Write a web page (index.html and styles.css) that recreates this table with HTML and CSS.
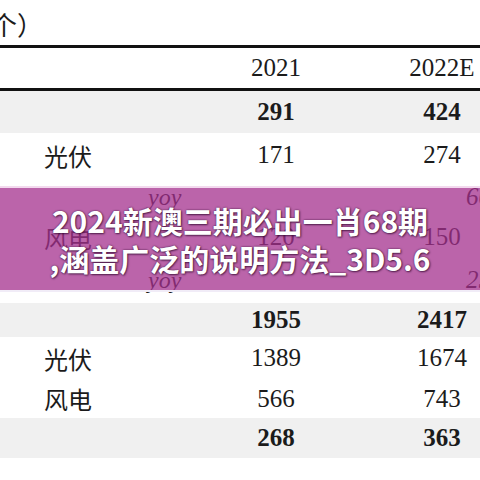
FILE: index.html
```html
<!DOCTYPE html>
<html lang="zh">
<head>
<meta charset="UTF-8">
<meta name="viewport" content="width=device-width, initial-scale=1.0">
<title>2024新澳三期必出一肖68期</title>
<link rel="stylesheet" href="styles.css">
</head>
<body>

<div class="sheet">
    <div class="caption"><span>个）</span></div>

    <div class="row head">
        <span class="label"></span>
        <span class="num">2021</span>
        <span class="num">2022E</span>
    </div>

    <div class="row total r-a">
        <span class="label"></span>
        <span class="num">291</span>
        <span class="num">424</span>
    </div>
    <div class="row r-b">
        <span class="label">光伏</span>
        <span class="num">171</span>
        <span class="num">274</span>
    </div>
    <div class="row yoy r-c">
        <span class="label">yoy</span>
        <span class="num"></span>
        <span class="num edge">60%</span>
    </div>
    <div class="row r-d">
        <span class="label">风电</span>
        <span class="num">120</span>
        <span class="num">150</span>
    </div>
    <div class="row yoy r-e">
        <span class="label">yoy</span>
        <span class="num"></span>
        <span class="num edge">25%</span>
    </div>

    <div class="row total r-f">
        <span class="label"></span>
        <span class="num">1955</span>
        <span class="num">2417</span>
    </div>
    <div class="row r-g">
        <span class="label">光伏</span>
        <span class="num">1389</span>
        <span class="num">1674</span>
    </div>
    <div class="row r-h">
        <span class="label">风电</span>
        <span class="num">566</span>
        <span class="num">743</span>
    </div>
    <div class="row total r-i">
        <span class="label"></span>
        <span class="num">268</span>
        <span class="num">363</span>
    </div>

    <!-- title banner laid over the table -->
    <div class="banner">
        <p class="banner-title">2024新澳三期必出一肖68期<br>,涵盖广泛的说明方法_3D5.6</p>
    </div>
</div>

</body>
</html>
```

FILE: styles.css
```css
body {
    margin: 0;
    padding: 0;
    background-color: #fff;
    overflow: hidden;
}
.sheet {
    position: relative;
    width: 480px;
    height: 480px;
    overflow: hidden;
    color: #1b1b1b;
    font-family: "Liberation Serif", "Noto Sans CJK SC", serif;
    font-size: 25px;
}
.caption {
    height: 45px;
    border-bottom: 3px solid #111;
    font-family: "Noto Sans CJK SC", sans-serif;
    font-size: 26px;
    line-height: 48px;
    overflow: hidden;
}
.caption span {
    display: block;
    margin-left: -9px;
}
.row {
    display: grid;
    grid-template-columns: 200px 152px 128px;
    align-items: center;
    white-space: nowrap;
}
.row .label {
    padding-left: 44px;
    font-family: "Noto Sans CJK SC", sans-serif;
    font-size: 24px;
}
.row .num {
    text-align: center;
}
.row .num:last-child {
    padding-left: 52px;
}
.head {
    height: 40px;
    border-bottom: 3px solid #111;
}
.total {
    background-color: #f0f0f0;
    font-weight: bold;
}
.yoy .label {
    padding-left: 148px;
    font-family: "Liberation Serif", serif;
    font-style: italic;
}
.yoy .num.edge {
    text-align: left;
    padding-left: 114px;
    font-style: italic;
}
.r-a { height: 42px; }
.r-b { height: 44px; }
.r-c { height: 40px; }
.r-d { height: 40px; }
.r-e { height: 46px; }
.r-f { height: 34px; }
.r-g { height: 42px; }
.r-h { height: 39px; }
.r-i { height: 40px; }

.banner {
    position: absolute;
    top: 188px;
    left: 0;
    right: 0;
    height: 102px;
    display: flex;
    align-items: center;
    justify-content: center;
    background-color: rgba(164, 48, 141, 0.75);
    box-shadow: 0 -2px 0 #f3d9ee, 0 2px 0 #f1ecf7;
}
.banner-title {
    margin: 0;
    color: #fff;
    font-family: "Noto Sans CJK SC", sans-serif;
    font-weight: bold;
    font-size: 30px;
    line-height: 38px;
    text-align: center;
    white-space: nowrap;
    text-shadow: 0 0 2px rgba(40, 0, 40, 0.8), 1px 1px 2px rgba(40, 0, 40, 0.6);
}
```
